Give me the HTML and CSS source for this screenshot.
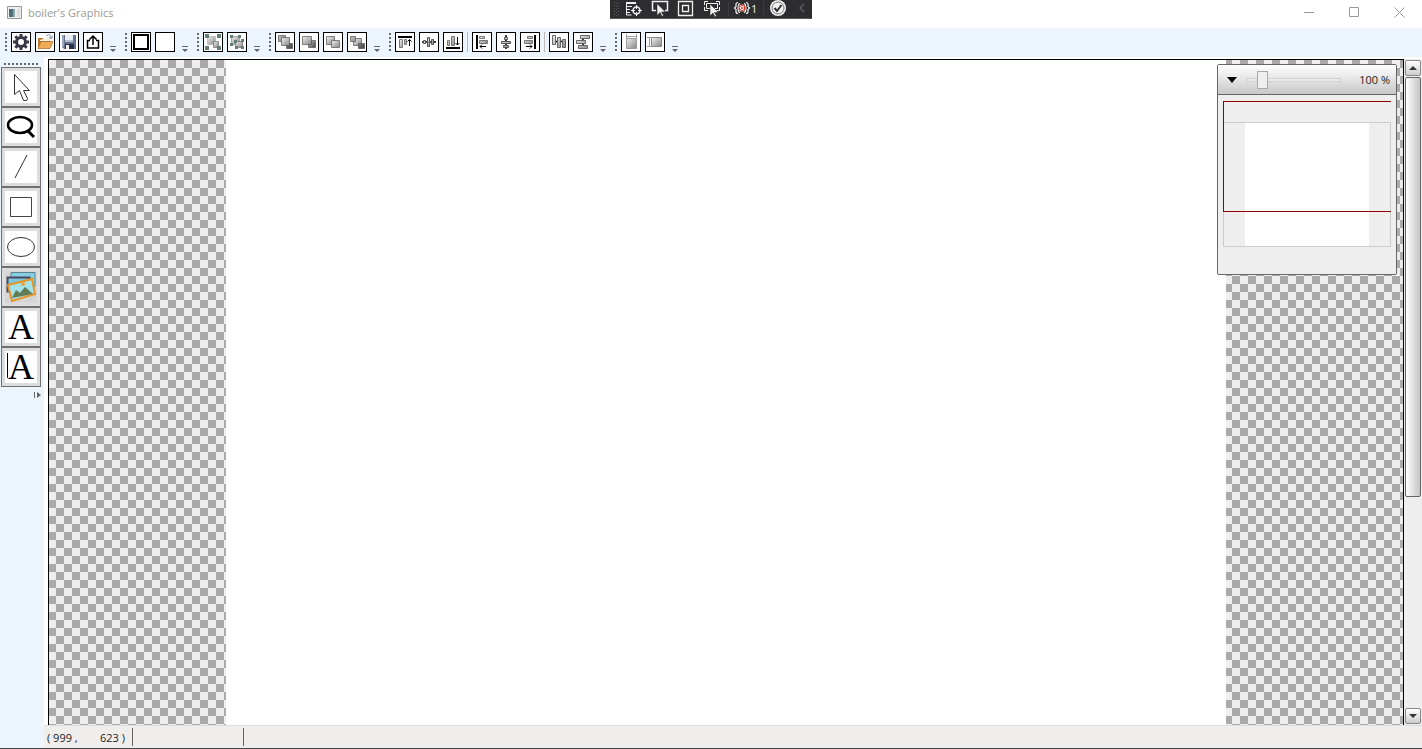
FILE: index.html
```html
<!DOCTYPE html>
<html lang="en">
<head>
  <meta charset="utf-8">
  <title>boiler's Graphics</title>
  <link rel="stylesheet" href="styles.css">
</head>
<body>

  <svg class="defs" width="0" height="0" aria-hidden="true">
    <defs>
      <linearGradient id="g" x1="0" y1="0" x2="1" y2="1">
        <stop offset="0" stop-color="#f0f0f0"/><stop offset="1" stop-color="#858585"/>
      </linearGradient>
      <linearGradient id="gd" x1="0" y1="0" x2="1" y2="1">
        <stop offset="0" stop-color="#c4c4c4"/><stop offset="1" stop-color="#444"/>
      </linearGradient>
    </defs>
  </svg>

  <header class="titlebar">
    <svg class="app-icon" width="15" height="13" viewBox="0 0 15 13"><path d="M.5.5h14v12H.5z" fill="#eee" stroke="#999"/><path d="M2 3h6v8H2z" fill="#4e6d78"/><path d="M6 3h2v8H6z" fill="#89a8a5"/><path d="M10 3h3v8h-3z" fill="#ddd"/></svg>
    <span class="title">boiler's Graphics</span>
    <div class="window-buttons">
      <button aria-label="Minimize"><svg width="11" height="11" viewBox="0 0 11 11"><path d="M0 5.500h10"/></svg></button>
      <button aria-label="Maximize"><svg width="11" height="11" viewBox="0 0 11 11"><path d="M.5.5h9v9h-9z"/></svg></button>
      <button aria-label="Close"><svg width="11" height="11" viewBox="0 0 11 11"><path d="M.5.5l10 10M10.500.5l-10 10"/></svg></button>
    </div>

    <div class="debug-bar">
      <svg width="202" height="18" viewBox="0 0 202 18" fill="none" stroke="#f1f1f1">
        <path d="M4.500 2v14M8.500 2v14M6.500 3v14" stroke="#58585c" stroke-dasharray="1 2"/>
        <path d="M16 2.500h10M16 3.500h10M17 6.500h5M17 9.500h3M17 12.500h3M16.500 4v11h5"/>
        <circle cx="26.500" cy="10.500" r="3.500" stroke-width="1.500"/><path d="M26.500 5v4M26.500 12v4M21 10.500h4M28 10.500h4"/>
        <path d="M46 10.500h-3.500v-9h15v9H55" stroke-width="1.500"/>
        <path d="M47 3.500v12l3-3 2 4 1.500-1-2-3.500h4z" fill="#f1f1f1" stroke="#2d2d30" stroke-width=".6"/>
        <path d="M68.500 1.500h14v14h-14z" stroke-width="1.300"/><path d="M72.500 5.500h6v6h-6z" stroke-width="1.300"/>
        <path d="M94.500 5V1.500H98M106 1.500h3.500V5M94.500 7v3.500H98M109.500 7v3.500H106M96.500 3.500h11v5h-11z"/>
        <path d="M100 4v12l3-3 2 4 1.500-1-2-3.500h4z" fill="#f1f1f1" stroke="#2d2d30" stroke-width=".6"/>
        <path d="M128 2.500q-2 0-2 2v2l-1.500 1.500 1.500 1.500v2q0 2 2 2M136 2.500q2 0 2 2v2l1.500 1.500-1.500 1.500v2q0 2-2 2M129.500 3q-3 5 0 10M134.500 3q3 5 0 10" stroke-width="1.200"/>
        <circle cx="132" cy="8" r="3.500" fill="#fff" stroke="none"/><circle cx="132" cy="8" r="2.800" stroke="#d3341f" stroke-width="1.600" stroke-dasharray="2.400 .6"/><circle cx="132" cy="8" r="1" fill="#d3341f" stroke="none"/>
        <path d="M118.500 2v14M153.500 2v14" stroke="#3b3b40"/>
        <circle cx="168" cy="8" r="8" fill="#f1f1f1" stroke="none"/><circle cx="168" cy="8" r="6" stroke="#77777a"/><path d="M164.500 8l2.500 3 4.500-6" stroke="#2d2d30" stroke-width="2"/>
        <path d="M194 4l-4 4 4 4" stroke="#66666a" stroke-width="1.300"/>
      </svg>
      <span class="debug-count">1</span>
    </div>
  </header>

  <nav class="toolbar" aria-label="Commands">
    <div class="group">
      <i class="grip"></i>
      <button aria-label="Settings"><svg viewBox="1 1 18 18"><g stroke="#383846" fill="none"><circle cx="10" cy="10" r="4.500" stroke-width="3"/><path d="M10 2v3M10 15v3M2 10h3M15 10h3M4.300 4.300l2 2M13.700 13.700l2 2M4.300 15.700l2-2M13.700 6.300l2-2" stroke-width="3"/></g></svg></button>
      <button aria-label="Open"><svg viewBox="1 1 18 18"><path d="M3 16V6h5l1 1.500h6V16z" fill="#b87a35"/><path d="M5 8l9-3 1 4H5z" fill="#f6f0df"/><path d="M3 16.500l3-7h12l-3 7z" fill="#f0ad55" stroke="#a56423" stroke-width=".7"/><path d="M11 4q3-3 5 0v2M14 5l2 2 2-3" fill="none" stroke="#7b93a5"/></svg></button>
      <button aria-label="Save"><svg viewBox="1 1 18 18"><path d="M3 3h14v14H5l-2-2z" fill="#66718d"/><path d="M3 3h2v12H3z" fill="#9ba9c0"/><path d="M6 3h8v7H6z" fill="#e9edf4"/><path d="M6 8h8v2H6z" fill="#b5bdcb"/><path d="M6 12h9v5H6z" fill="#29324d"/><path d="M7 13h3v4H7z" fill="#f2f2f2"/></svg></button>
      <button aria-label="Export"><svg viewBox="1 1 18 18"><path d="M7 8.500H4.500v7.500h11V8.500H13M10 13V4.500M6.500 7.500L10 4l3.500 3.500" fill="none" stroke="#000" stroke-width="1.500"/></svg></button>
      <button class="overflow" aria-label="More"></button>
    </div>
    <div class="group">
      <i class="grip"></i>
      <button aria-label="Edge color"><svg viewBox="1 1 18 18"><path d="M3 3h14v14H3z" fill="#fff" stroke="#000" stroke-width="2"/></svg></button>
      <button aria-label="Fill color"></button>
      <button class="overflow" aria-label="More"></button>
    </div>
    <div class="group">
      <i class="grip"></i>
      <button aria-label="Group"><svg viewBox="1 1 18 18"><path d="M4.500 4.500h8v8h-8z" fill="url(#g)" stroke="#aaa" stroke-width=".6"/><path d="M10.500 9.500h5v6h-5z" fill="url(#g)" stroke="#777" stroke-width=".8"/><path d="M2 2h4v4H2zM14 2h4v4h-4zM2 14h4v4H2zM14 14h4v4h-4z" fill="#667f76"/></svg></button>
      <button aria-label="Ungroup"><svg viewBox="1 1 18 18"><path d="M4.500 4.500h8v8h-8z" fill="url(#g)" stroke="#999" stroke-width=".8"/><path d="M8.500 9.500h7v6h-7z" fill="url(#g)" stroke="#777" stroke-width=".8"/><path d="M3 3h3v3H3zM11 3h3v3h-3zM3 11h3v3H3zM7 8h3v3H7zM14 7h3v3h-3zM8 14h3v3H8zM14 14h3v3h-3z" fill="#667f76"/></svg></button>
      <button class="overflow" aria-label="More"></button>
    </div>
    <div class="group">
      <i class="grip"></i>
      <button aria-label="Bring to front"><svg viewBox="1 1 18 18" stroke="#555" stroke-width=".7"><path d="M3.500 3.500h7v6h-7zM11.500 11.500h6v5h-6z" fill="url(#gd)"/><path d="M6.500 5.500h8v8h-8z" fill="url(#g)"/></svg></button>
      <button aria-label="Bring forward"><svg viewBox="1 1 18 18" stroke="#555" stroke-width=".7"><path d="M9.500 8.500h7v7h-7z" fill="url(#gd)"/><path d="M3.500 4.500h9v8h-9z" fill="url(#g)"/></svg></button>
      <button aria-label="Send backward"><svg viewBox="1 1 18 18" stroke="#555" stroke-width=".7"><path d="M3.500 4.500h8v8h-8z" fill="url(#g)"/><path d="M8.500 8.500h8v7h-8z" fill="url(#g)"/></svg></button>
      <button aria-label="Send to back"><svg viewBox="1 1 18 18" stroke="#555" stroke-width=".7"><path d="M6.500 6.500h8v7h-8z" fill="url(#g)"/><path d="M3.500 4.500h5v5h-5zM11.500 11.500h6v5h-6z" fill="url(#gd)"/></svg></button>
      <button class="overflow" aria-label="More"></button>
    </div>
    <div class="group">
      <i class="grip"></i>
      <button aria-label="Align top"><svg viewBox="1 1 18 18"><path d="M3 4h14v2H3z"/><path d="M4.500 7.500h3v8h-3zM9.500 7.500h2v5h-2z" fill="url(#g)" stroke="#777"/><path d="M14.500 14V8M12.500 9.500l2-2 2 2" fill="none" stroke="#000"/></svg></button>
      <button aria-label="Align vertical center"><svg viewBox="1 1 18 18"><path d="M3 10h14" stroke="#000" stroke-width="1.500"/><path d="M4.500 8.500h2v3h-2zM8.500 5.500h2v9h-2zM12.500 7.500h2v5h-2z" fill="url(#g)" stroke="#555"/></svg></button>
      <button aria-label="Align bottom"><svg viewBox="1 1 18 18"><path d="M3 15h14v2H3z"/><path d="M4.500 8.500h2v5h-2zM8.500 4.500h3v9h-3z" fill="url(#g)" stroke="#777"/><path d="M14.500 5v8M12.500 11l2 2 2-2" fill="none" stroke="#000"/></svg></button>
      <i class="separator"></i>
      <button aria-label="Align left"><svg viewBox="1 1 18 18"><path d="M4 3h2v14H4z"/><path d="M7.500 4.500h5v2h-5zM7.500 8.500h8v3h-8z" fill="url(#g)" stroke="#777"/><path d="M14 14.500H8M10 12.500l-2 2 2 2" fill="none" stroke="#000"/></svg></button>
      <button aria-label="Align horizontal center"><svg viewBox="1 1 18 18"><path d="M10 3v14" stroke="#000" stroke-width="1.500"/><path d="M8.500 5.500h3v2h-3zM5.500 9.500h9v2h-9zM7.500 13.500h5v2h-5z" fill="url(#g)" stroke="#555"/></svg></button>
      <button aria-label="Align right"><svg viewBox="1 1 18 18"><path d="M14 3h2v14h-2z"/><path d="M7.500 4.500h5v2h-5zM4.500 8.500h8v3h-8z" fill="url(#g)" stroke="#777"/><path d="M6 14.500h6M10 12.500l2 2-2 2" fill="none" stroke="#000"/></svg></button>
      <i class="separator"></i>
      <button aria-label="Distribute horizontally"><svg viewBox="1 1 18 18"><path d="M4 9.500h13" stroke="#000" stroke-width="1.500"/><path d="M3.500 3.500h3v9h-3zM8.500 5.500h3v10h-3zM13.500 7.500h3v8h-3z" fill="url(#g)" stroke="#666"/></svg></button>
      <button aria-label="Distribute vertically"><svg viewBox="1 1 18 18"><path d="M10 4v12" stroke="#000" stroke-width="1.500"/><path d="M7.500 3.500h9v3h-9zM3.500 8.500h9v3h-9zM5.500 13.500h9v3h-9z" fill="url(#g)" stroke="#666"/></svg></button>
      <button class="overflow" aria-label="More"></button>
    </div>
    <div class="group">
      <i class="grip"></i>
      <button aria-label="Uniform width"><svg viewBox="1 1 18 18"><path d="M5.500 6.500h10v10h-10z" fill="url(#g)" stroke="#999"/><path d="M5.500 2v4M15.500 2v4M5.500 4.500h10" stroke="#999"/></svg></button>
      <button aria-label="Uniform height"><svg viewBox="1 1 18 18"><path d="M6.500 5.500h10v9h-10z" fill="url(#g)" stroke="#888"/><path d="M2 5.500h4M2 14.500h4M4.500 5.500v9" stroke="#999"/></svg></button>
      <button class="overflow" aria-label="More"></button>
    </div>
  </nav>

  <main class="workspace">
    <aside class="toolbox">
      <i class="grip-h"></i>
      <button aria-label="Pointer"><svg viewBox="0 0 32 32"><path d="M9.500 3.500v20l5-4 4 10h3l1-2-4-8h6z" fill="#fff" stroke="#333" stroke-width="1"/></svg></button>
      <button aria-label="Zoom"><svg viewBox="0 0 32 32" fill="none" stroke="#000"><ellipse cx="15" cy="14" rx="12" ry="8" stroke-width="2.500"/><path d="M22 19l7 7" stroke-width="3"/></svg></button>
      <button aria-label="Line"><svg viewBox="0 0 32 32"><path d="M10 27L22 4" stroke="#333"/></svg></button>
      <button aria-label="Rectangle"><svg viewBox="0 0 32 32"><path d="M5.500 6.500h21v19h-21z" fill="none" stroke="#444"/></svg></button>
      <button aria-label="Ellipse"><svg viewBox="0 0 32 32"><ellipse cx="16" cy="16" rx="13.500" ry="9.500" fill="none" stroke="#333"/></svg></button>
      <button class="selected" aria-label="Picture"><svg viewBox="0 0 32 32"><path d="M1 20L15 5M1 30L6 25M23 31L31 23" stroke="#c8c8c8"/><path d="M6 1.500h24v14H6z" fill="#84cfe0" stroke="#5c8490"/><path d="M2.500 6.500h22v14h-22z" fill="#7ec7da" stroke="#49465e" stroke-width="2"/><path d="M3 14l24-6 3 15-23 7z" fill="#a5e1e8" stroke="#e69528" stroke-width="2"/><path d="M7 27l4-8 4 3 5-6 8 7z" fill="#627c57"/><circle cx="18" cy="13" r="2" fill="#f0a33c"/></svg></button>
      <button class="letter" aria-label="Horizontal text">A</button>
      <button class="letter caret" aria-label="Vertical text">A</button>
      <svg class="more" width="7" height="6" viewBox="0 0 7 6"><path d="M0 0h1v6H0zM3 0l4 3-4 3z" fill="#666"/></svg>
    </aside>

    <section class="editor">
      <div class="view">
        <div class="canvas">
          <div class="sheet"></div>
          <div class="navigator">
            <div class="navigator-head">
              <button class="collapse" aria-label="Collapse"><svg width="10" height="6" viewBox="0 0 10 6"><path d="M0 0h10L5 6z"/></svg></button>
              <input type="range" min="25" max="650" value="100" aria-label="Zoom">
              <output>100 %</output>
            </div>
            <div class="navigator-body">
              <div class="thumbnail"><div class="thumbnail-sheet"></div></div>
              <div class="viewport"></div>
            </div>
          </div>
        </div>
        <div class="scrollbar">
          <button class="scroll-button" aria-label="Scroll up"><svg width="8" height="4" viewBox="0 0 8 4"><path d="M0 4h8L4 0z"/></svg></button>
          <div class="scroll-track"><div class="scroll-thumb"></div></div>
          <button class="scroll-button" aria-label="Scroll down"><svg width="8" height="4" viewBox="0 0 8 4"><path d="M0 0h8L4 4z"/></svg></button>
        </div>
      </div>
      <footer class="statusbar">
        <div class="position"><span>( 999 ,</span><span>623 )</span></div>
        <div class="status-cell"></div>
      </footer>
    </section>
  </main>

</body>
</html>
```
FILE: styles.css
```css
* {
  box-sizing: border-box;
}

body {
  margin: 0;
  height: 100vh;
  overflow: hidden;
  display: flex;
  flex-direction: column;
  font-family: "Open Sans", "Noto Sans", sans-serif;
  font-size: 11px;
  color: #222;
  background: #fff;
  border-bottom: 1px solid #444;
}

button {
  margin: 0;
  padding: 0;
  border: 0;
  background: none;
}

svg {
  display: block;
}

.defs {
  position: absolute;
}

/* title bar */
.titlebar {
  position: relative;
  flex: none;
  height: 28px;
  display: flex;
  align-items: center;
  padding: 0 0 4px 7px;
}

.title {
  margin-left: 6px;
  color: #999;
}

.window-buttons {
  display: flex;
  margin-left: auto;
}

.window-buttons button {
  width: 45px;
  height: 24px;
  display: flex;
  align-items: center;
  justify-content: center;
}

.window-buttons svg {
  fill: none;
  stroke: #999;
}

.debug-bar {
  position: absolute;
  top: 0;
  left: 50%;
  width: 202px;
  height: 19px;
  margin-left: -101px;
  background: #2d2d30;
  border-bottom: 1px solid #55555a;
}

.debug-count {
  position: absolute;
  left: 141px;
  top: 0;
  line-height: 18px;
  color: #f1f1f1;
}

/* command toolbar */
.toolbar {
  flex: none;
  height: 29px;
  display: flex;
  align-items: center;
  padding: 0 0 1px 5px;
  background: #ecf4fe;
}

.group {
  display: flex;
  align-items: center;
}

.grip {
  width: 2px;
  height: 18px;
  margin-right: 4px;
  background: repeating-linear-gradient(#666 0 2px, transparent 2px 4px);
}

.group button {
  width: 20px;
  height: 20px;
  margin-right: 4px;
  background: #fff;
  border: 1px solid #000;
}

.group button svg {
  width: 18px;
  height: 18px;
}

.group .overflow {
  width: 6px;
  height: 6px;
  margin: 14px 9px 0 3px;
  border: 0;
  background: #666;
  clip-path: polygon(0 0, 100% 0, 100% 1px, 0 1px, 0 3px, 100% 3px, 50% 100%, 0 3px);
}

.separator {
  width: 1px;
  height: 20px;
  margin-right: 4px;
  background: #bbb;
}

/* drawing tools */
.workspace {
  flex: 1;
  min-height: 0;
  display: flex;
}

.toolbox {
  flex: none;
  width: 44px;
  padding: 6px 3px 0 1px;
  background: #ecf4fe;
}

.grip-h {
  display: block;
  width: 34px;
  height: 2px;
  margin: 0 0 2px 3px;
  background: repeating-linear-gradient(90deg, #666 0 2px, transparent 2px 4px);
}

.toolbox button {
  display: block;
  width: 40px;
  height: 40px;
  padding: 3px;
  border: 1px solid #707070;
  background: #fff content-box;
  box-shadow: inset 0 0 0 3px #ddd;
}

.toolbox .selected {
  background: #d6d6d6;
}

.toolbox .letter {
  font-family: "Liberation Serif", serif;
  font-size: 36px;
  line-height: 32px;
  color: #000;
}

.toolbox .caret {
  position: relative;
}

.caret::before {
  content: "";
  position: absolute;
  left: 5px;
  top: 5px;
  width: 1px;
  height: 25px;
  background: #000;
}

.more {
  margin: 5px 0 0 33px;
}

/* canvas */
.editor {
  flex: 1;
  min-width: 0;
  display: flex;
  flex-direction: column;
}

.view {
  flex: 1;
  min-height: 0;
  display: flex;
  padding: 2px 0 0 4px;
}

.canvas {
  position: relative;
  flex: 1;
  display: flex;
  justify-content: center;
  border: 1px solid #000;
  border-bottom: 0;
  background: repeating-conic-gradient(#aaa 0 25%, #eee 0 50%) -1px 0 / 16px 16px;
}

.sheet {
  width: 1000px;
  background: #fff;
}

.navigator {
  position: absolute;
  top: 4px;
  right: 6px;
  width: 180px;
  border: 1px solid #666;
  border-radius: 2px;
  background: #eee;
}

.navigator-head {
  display: flex;
  align-items: center;
  height: 30px;
  padding: 0 6px 0 9px;
  border-bottom: 1px solid #666;
  background: linear-gradient(#fff, #c8c8c8);
}

.collapse {
  margin-right: 10px;
}

.navigator-head input {
  appearance: none;
  width: 94px;
  height: 18px;
  margin: 0;
  background: linear-gradient(#d2d2d2, #d2d2d2) center / 100% 4px no-repeat;
}

.navigator-head input::-webkit-slider-runnable-track {
  height: 18px;
  background: linear-gradient(#e7eaea, #e7eaea) center / 92px 2px no-repeat;
}

.navigator-head input::-webkit-slider-thumb {
  appearance: none;
  width: 11px;
  height: 18px;
  border: 1px solid #aaa;
  background: #eee;
}

.navigator-head output {
  margin-left: auto;
  white-space: nowrap;
}

.navigator-body {
  position: relative;
  padding: 27px 5px;
}

.thumbnail {
  height: 125px;
  border: 1px solid #ccc;
  display: flex;
  justify-content: center;
}

.thumbnail-sheet {
  width: 124px;
  background: #fff;
}

.viewport {
  position: absolute;
  top: 6px;
  left: 5px;
  right: 5px;
  height: 111px;
  border: 1px solid #900000;
  border-right: 0;
}

.scrollbar {
  flex: none;
  width: 18px;
  padding: 1px;
  display: flex;
  flex-direction: column;
  background: #eee;
}

.scroll-button {
  flex: none;
  height: 16px;
  display: flex;
  align-items: center;
  justify-content: center;
  border: 1px solid #888;
  border-radius: 2px;
  background: linear-gradient(#fff, #ccc);
}

.scroll-button svg {
  fill: #333;
}

.scroll-track {
  flex: 1;
  padding: 1px 0;
}

.scroll-thumb {
  height: calc(100% * 2 / 3);
  border: 1px solid #666;
  border-radius: 2px;
  background: linear-gradient(90deg, #fff, #c4c4c4);
}

/* status bar */
.statusbar {
  flex: none;
  height: 23px;
  display: flex;
  padding: 2px 0 2px 3px;
  border-top: 1px solid #ddd;
  background: #f0eeed;
}

.position {
  width: 86px;
  display: flex;
  justify-content: space-between;
  align-items: center;
  padding-right: 7px;
  border-right: 1px solid #666;
}

.status-cell {
  width: 111px;
  border-right: 1px solid #666;
}
```
